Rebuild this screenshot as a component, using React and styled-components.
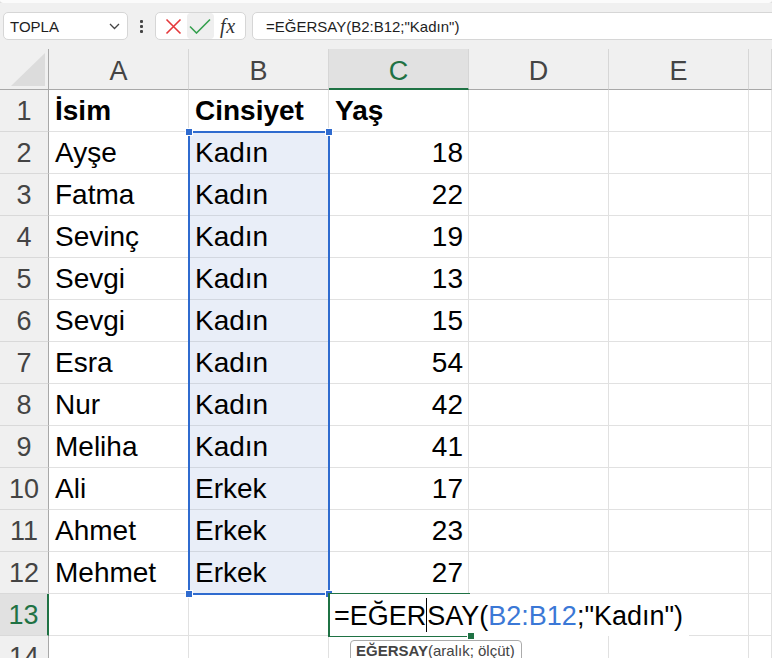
import React from "react";
import styled, { createGlobalStyle } from "styled-components";

const GlobalStyle = createGlobalStyle`
  html, body {
    margin: 0;
    padding: 0;
    background: #ffffff;
    overflow: hidden;
    font-family: "Liberation Sans", Arial, sans-serif;
  }
  * { box-sizing: border-box; }
`;

const GREEN = "#1f7244";
const BLUE = "#2f6bcf";

const Page = styled.div`
  width: 772px;
  height: 658px;
  overflow: hidden;
  background: #f0f0f0;
`;

const TopStrip = styled.div`
  height: 3px;
  background: #fbfbfb;
  border-radius: 0 0 6px 6px;
  box-shadow: 0 1px 2px rgba(0, 0, 0, 0.18);
`;

const Toolbar = styled.div`
  height: 46px;
  display: flex;
  align-items: center;
  padding-left: 3px;
  background: #f0f0f0;
`;

const Box = styled.div`
  height: 28px;
  background: #fff;
  border: 1px solid #d6d6d6;
  border-radius: 5px;
  display: flex;
  align-items: center;
`;

const NameBox = styled(Box)`
  width: 125px;
  padding: 0 7px 0 6px;
  justify-content: space-between;
  font-size: 15px;
  color: #1e1e1e;
`;

const Dots = styled.div`
  width: 27px;
  display: flex;
  flex-direction: column;
  align-items: center;
  gap: 2px;
  span {
    width: 3px;
    height: 3px;
    background: #444;
    border-radius: 1px;
  }
`;

const CommitBox = styled(Box)`
  width: 91px;
  padding: 0 4px;
  gap: 1px;
`;

const IconBtn = styled.div`
  width: 29px;
  height: 26px;
  border-radius: 4px;
  display: flex;
  align-items: center;
  justify-content: center;
  background: ${(p) => (p.$hover ? "#efefef" : "transparent")};
`;

const Fx = styled.span`
  font-family: "Liberation Serif", "Times New Roman", serif;
  font-style: italic;
  font-size: 20px;
  color: #333;
  letter-spacing: 0.5px;
`;

const FormulaBox = styled(Box)`
  flex: 1;
  margin-left: 6px;
  margin-right: -12px;
  padding-left: 13px;
  font-size: 15px;
  color: #1e1e1e;
`;

const Sheet = styled.div`
  position: relative;
  display: grid;
  grid-template-columns: 49px repeat(5, 140px) 1fr;
  grid-template-rows: 41px repeat(14, 42px);
  background: #fff;
`;

const Corner = styled.div`
  background: #f0f0f0;
  border-right: 1px solid #a8a8a8;
  border-bottom: 1px solid #a8a8a8;
  position: relative;
  svg {
    position: absolute;
    right: 3px;
    bottom: 3px;
  }
`;

const ColHead = styled.div`
  background: ${(p) => (p.$active ? "#e1e1e1" : "#f0f0f0")};
  border-right: 1px solid #d6d6d6;
  border-bottom: ${(p) => (p.$active ? `2px solid ${GREEN}` : "1px solid #a8a8a8")};
  color: ${(p) => (p.$active ? GREEN : "#444")};
  font-size: 27px;
  display: flex;
  justify-content: center;
  align-items: flex-start;
  line-height: 44px;
`;

const RowHead = styled.div`
  background: ${(p) => (p.$active ? "#e1e1e1" : "#f0f0f0")};
  border-right: ${(p) => (p.$active ? `2px solid ${GREEN}` : "1px solid #a8a8a8")};
  border-bottom: 1px solid #d9d9d9;
  color: ${(p) => (p.$active ? GREEN : "#444")};
  font-size: 27px;
  text-align: center;
  line-height: 42px;
`;

const Cell = styled.div`
  background: ${(p) => (p.$sel ? "#e9eef8" : "#fff")};
  border-right: 1px solid ${(p) => (p.$sel ? "#d2d7e0" : "#e1e1e1")};
  border-bottom: 1px solid ${(p) => (p.$sel ? "#d2d7e0" : "#e1e1e1")};
  font-size: 28px;
  font-weight: ${(p) => (p.$bold ? 700 : 400)};
  color: #000;
  text-align: ${(p) => (p.$num ? "right" : "left")};
  padding: 0 5px 0 6px;
  line-height: 42px;
  white-space: nowrap;
`;

const Selection = styled.div`
  position: absolute;
  left: 188px;
  top: 82px;
  width: 142px;
  height: 464px;
  border: 2px solid ${BLUE};
  pointer-events: none;
`;

const Handle = styled.span`
  position: absolute;
  width: 6px;
  height: 6px;
  background: ${(p) => p.$color || BLUE};
  border: 1px solid #fff;
  box-sizing: content-box;
  ${(p) => (p.$left ? "left: -5px;" : "right: -5px;")}
  ${(p) => (p.$top ? "top: -5px;" : "bottom: -5px;")}
`;

const Editor = styled.div`
  position: absolute;
  left: 328px;
  top: 544px;
  width: 142px;
  height: 44px;
  border: 2px solid ${GREEN};
  border-right: none;
  display: flex;
  align-items: center;
  overflow: visible;
`;

const EditText = styled.div`
  background: #fff;
  white-space: nowrap;
  font-size: 27px;
  line-height: 40px;
  padding: 2px 6px 0 4px;
  color: #000;
  display: flex;
  align-items: center;
  position: relative;
  z-index: 1;
`;

const Ref = styled.span`
  color: #3b78d6;
`;

const Caret = styled.span`
  display: inline-block;
  width: 1px;
  height: 34px;
  margin-top: -2px;
  background: #000;
`;

const Tip = styled.div`
  position: absolute;
  left: 350px;
  top: 591px;
  height: 22px;
  padding: 1px 6px 0 5px;
  background: #fff;
  border: 1px solid #ababab;
  border-radius: 4px;
  font-size: 15px;
  color: #444;
  white-space: nowrap;
  z-index: 2;
  b { font-weight: 700; color: #444; }
`;

const rows = [
  ["İsim", "Cinsiyet", "Yaş"],
  ["Ayşe", "Kadın", 18],
  ["Fatma", "Kadın", 22],
  ["Sevinç", "Kadın", 19],
  ["Sevgi", "Kadın", 13],
  ["Sevgi", "Kadın", 15],
  ["Esra", "Kadın", 54],
  ["Nur", "Kadın", 42],
  ["Meliha", "Kadın", 41],
  ["Ali", "Erkek", 17],
  ["Ahmet", "Erkek", 23],
  ["Mehmet", "Erkek", 27],
  ["", "", ""],
  ["", "", ""],
];

const cols = ["A", "B", "C", "D", "E", ""];

export default function App() {
  return (
    <Page>
      <GlobalStyle />
      <TopStrip />
      <Toolbar>
        <NameBox>
          <span>TOPLA</span>
          <svg width="11" height="7" viewBox="0 0 11 7">
            <path d="M1 1l4.5 4.5L10 1" fill="none" stroke="#444" strokeWidth="1.3" />
          </svg>
        </NameBox>
        <Dots>
          <span />
          <span />
          <span />
        </Dots>
        <CommitBox>
          <IconBtn>
            <svg width="17" height="17" viewBox="0 0 17 17">
              <path d="M1.5 1.5l14 14M15.5 1.5l-14 14" stroke="#e5383b" strokeWidth="1.6" fill="none" />
            </svg>
          </IconBtn>
          <IconBtn $hover>
            <svg width="22" height="16" viewBox="0 0 22 16">
              <path d="M1 8.5l6.5 6.5L21 1.5" stroke="#36a04f" strokeWidth="1.6" fill="none" />
            </svg>
          </IconBtn>
          <IconBtn>
            <Fx>fx</Fx>
          </IconBtn>
        </CommitBox>
        <FormulaBox>=EĞERSAY(B2:B12;"Kadın")</FormulaBox>
      </Toolbar>

      <Sheet>
        <Corner>
          <svg width="34" height="33" viewBox="0 0 34 33">
            <path d="M34 0V33H0Z" fill="#dcdcdc" />
          </svg>
        </Corner>
        {cols.map((c, i) => (
          <ColHead key={i} $active={c === "C"}>
            {c}
          </ColHead>
        ))}
        {rows.map((r, ri) => {
          const n = ri + 1;
          const sel = n >= 2 && n <= 12;
          return (
            <React.Fragment key={ri}>
              <RowHead $active={n === 13}>{n}</RowHead>
              <Cell $bold={n === 1}>{r[0]}</Cell>
              <Cell $bold={n === 1} $sel={sel}>
                {r[1]}
              </Cell>
              <Cell $bold={n === 1} $num={typeof r[2] === "number"}>
                {r[2]}
              </Cell>
              <Cell />
              <Cell />
              <Cell />
            </React.Fragment>
          );
        })}

        <Selection>
          <Handle $left $top />
          <Handle $top />
          <Handle $left />
          <Handle />
        </Selection>

        <Editor>
          <EditText>
            =EĞER
            <Caret />
            SAY(<Ref>B2:B12</Ref>;"Kadın")
          </EditText>
          <Handle $color={GREEN} style={{ zIndex: 2 }} />
        </Editor>

        <Tip>
          <b>EĞERSAY</b>(aralık; ölçüt)
        </Tip>
      </Sheet>
    </Page>
  );
}
